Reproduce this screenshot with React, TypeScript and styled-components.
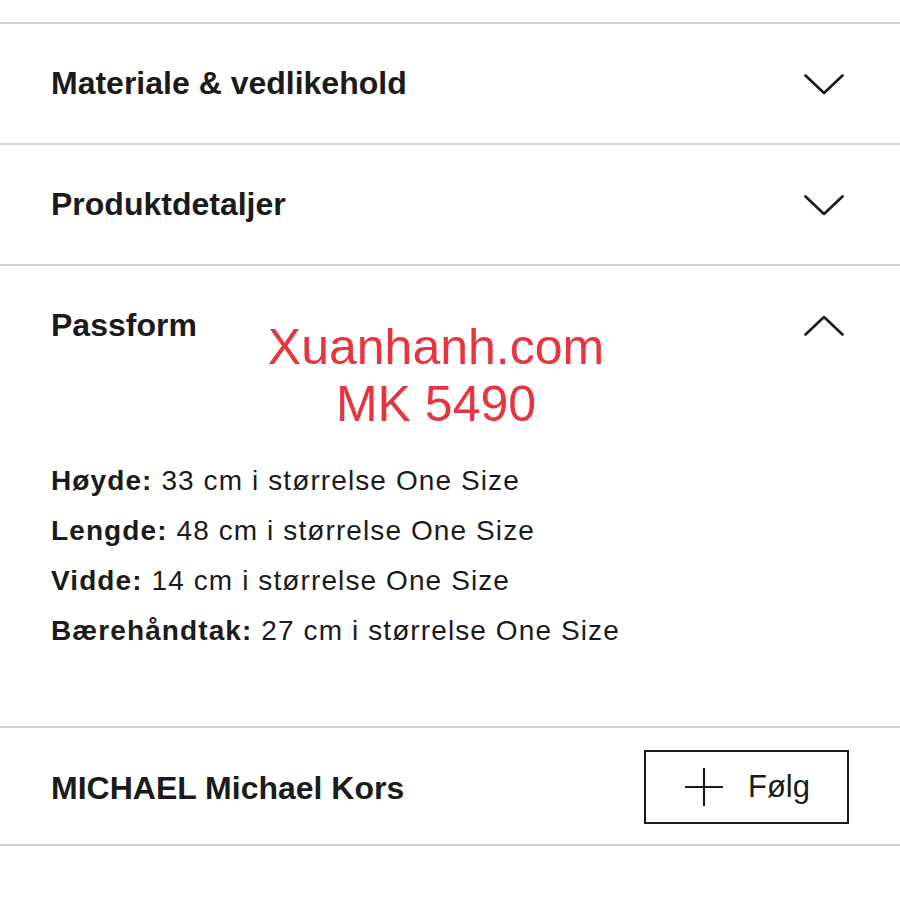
import styled, { createGlobalStyle } from "styled-components";

const GlobalStyle = createGlobalStyle`
  body {
    margin: 0;
    background: #ffffff;
    font-family: "Liberation Sans", Arial, sans-serif;
    color: #1b1b1b;
  }
`;

const Page = styled.div`
  width: 900px;
  padding-top: 22px;
`;

const List = styled.div`
  border-top: 2px solid #d4d4d4;
`;

const Item = styled.section`
  position: relative;
  border-bottom: 2px solid #d4d4d4;
`;

const Header = styled.div`
  height: 119px;
  display: flex;
  align-items: center;
  justify-content: space-between;
  padding: 0 56px 0 51px;
`;

const Title = styled.h3`
  margin: 0;
  font-size: 32px;
  font-weight: 700;
`;

const Chevron = styled.svg`
  width: 40px;
  height: 22px;
  display: block;
`;

const Body = styled.div`
  padding: 71px 51px 70px;
`;

const Line = styled.p`
  margin: 0;
  font-size: 28px;
  line-height: 50px;
  letter-spacing: 1.1px;
`;

const Label = styled.b`
  font-weight: 700;
`;

const Watermark = styled.div`
  position: absolute;
  top: 53px;
  left: 236px;
  width: 400px;
  text-align: center;
  color: #e8343f;
  font-size: 50px;
  line-height: 57px;
`;

const BrandRow = styled.div`
  height: 116px;
  display: flex;
  align-items: center;
  justify-content: space-between;
  padding: 0 51px;
`;

const BrandName = styled(Title)`
  padding-top: 4px;
`;

const FollowButton = styled.button`
  width: 205px;
  height: 74px;
  border: 2px solid #1b1b1b;
  background: #fff;
  display: flex;
  align-items: center;
  justify-content: center;
  gap: 25px;
  font-family: "Liberation Sans", Arial, sans-serif;
  font-size: 31px;
  color: #1b1b1b;
  padding: 0 0 0 2px;
  margin-top: 2px;
`;

const Arrow = ({ up }: { up?: boolean }) => (
  <Chevron viewBox="0 0 40 22">
    <path
      d={up ? "M1.5 19.5 L20 2 L38.5 19.5" : "M1.5 2.5 L20 20 L38.5 2.5"}
      fill="none"
      stroke="#1b1b1b"
      strokeWidth="2.6"
      strokeLinecap="round"
      strokeLinejoin="round"
    />
  </Chevron>
);

const Plus = () => (
  <svg width="38" height="38" viewBox="0 0 38 38">
    <path d="M19 0 V38 M0 19 H38" stroke="#1b1b1b" strokeWidth="2.2" />
  </svg>
);

const sizes = [
  { label: "Høyde:", value: "33 cm i størrelse One Size" },
  { label: "Lengde:", value: "48 cm i størrelse One Size" },
  { label: "Vidde:", value: "14 cm i størrelse One Size" },
  { label: "Bærehåndtak:", value: "27 cm i størrelse One Size" },
];

export default function App() {
  return (
    <Page>
      <GlobalStyle />
      <List>
        <Item>
          <Header>
            <Title>Materiale &amp; vedlikehold</Title>
            <Arrow />
          </Header>
        </Item>
        <Item>
          <Header>
            <Title>Produktdetaljer</Title>
            <Arrow />
          </Header>
        </Item>
        <Item>
          <Header>
            <Title>Passform</Title>
            <Arrow up />
          </Header>
          <Watermark>
            Xuanhanh.com
            <br />
            MK 5490
          </Watermark>
          <Body>
            {sizes.map((s) => (
              <Line key={s.label}>
                <Label>{s.label}</Label> {s.value}
              </Line>
            ))}
          </Body>
        </Item>
        <Item>
          <BrandRow>
            <BrandName>MICHAEL Michael Kors</BrandName>
            <FollowButton>
              <Plus />
              Følg
            </FollowButton>
          </BrandRow>
        </Item>
      </List>
    </Page>
  );
}
